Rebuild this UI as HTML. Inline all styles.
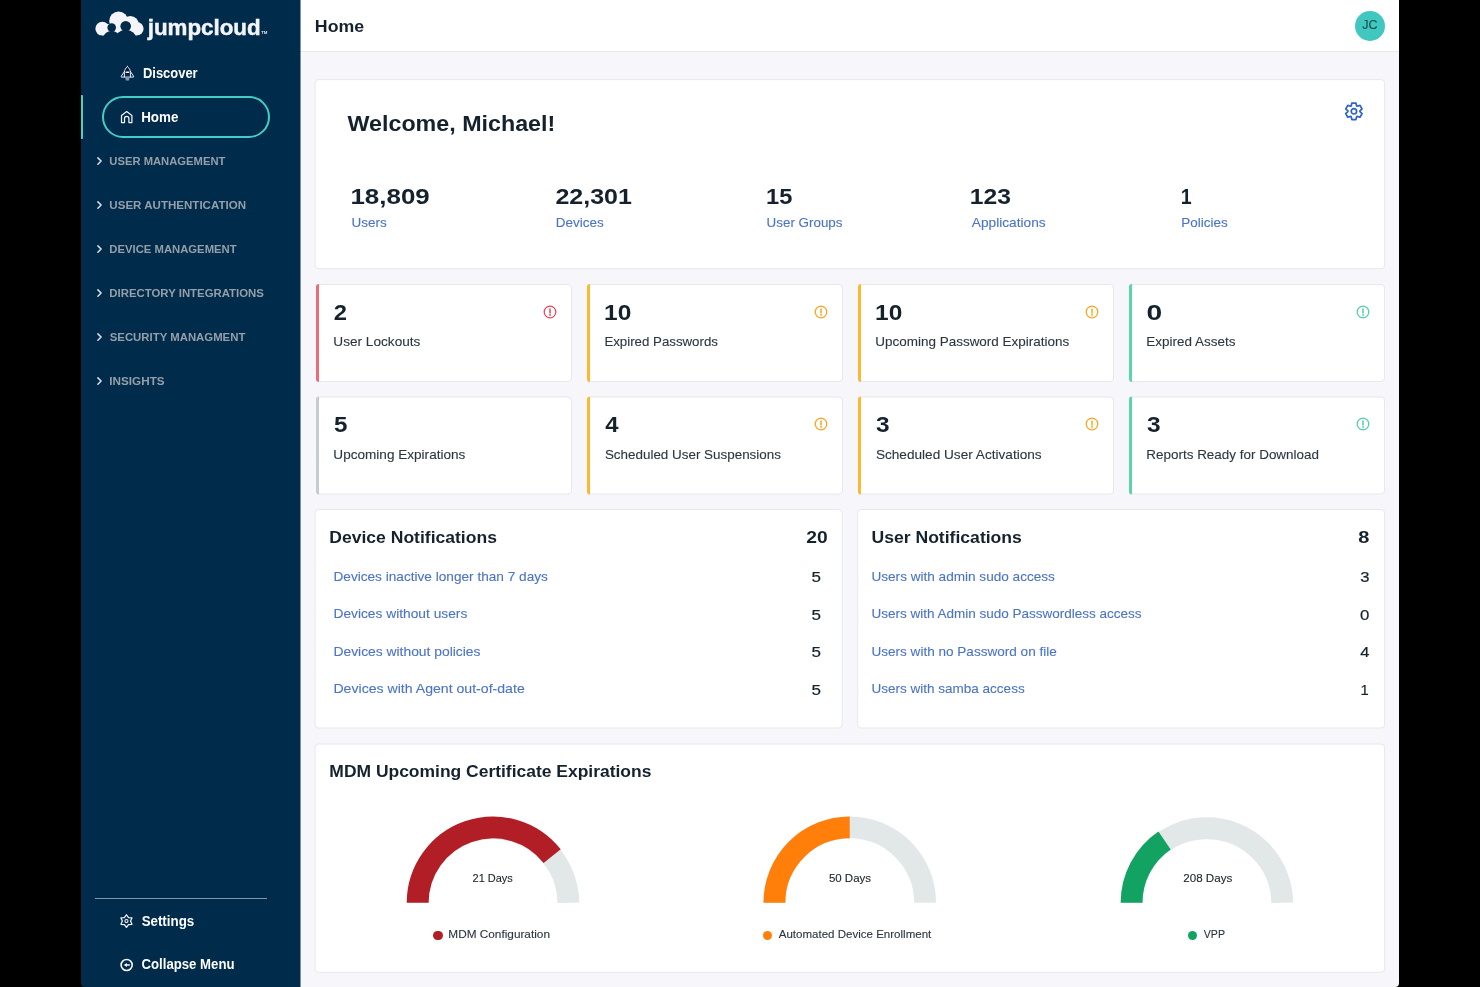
<!DOCTYPE html>
<html><head><meta charset="utf-8"><title>Home</title>
<style>
html,body{margin:0;padding:0;background:#000;}
body{width:1480px;height:987px;position:relative;overflow:hidden;font-family:"Liberation Sans",sans-serif;}
#root{position:absolute;left:0;top:0;width:1480px;height:987px;will-change:transform;}
.a{position:absolute;display:block;}
.t{position:absolute;display:block;white-space:pre;transform-origin:0 0;font-family:"Liberation Sans",sans-serif;}
</style></head><body><div id="root">
<div class="a" style="left:81px;top:0px;width:219px;height:987px;background:#002b4a;border-bottom-left-radius:4px;"></div>
<div class="a" style="left:300px;top:0px;width:1099px;height:987px;background:#f6f6fb;border-bottom-right-radius:4px;"></div>
<div class="a" style="left:300px;top:0px;width:1099px;height:51px;background:#fff;"></div>
<div class="a" style="left:300px;top:51px;width:1099px;height:1px;background:#e6e9ee;"></div>
<div class="a" style="left:300px;top:0px;width:1px;height:987px;background:rgba(0,43,74,0.5);"></div>
<svg class="a" style="left:93px;top:8px" width="54" height="32" viewBox="93 8 54 32">
<g fill="#f4f5fa">
<circle cx="102.4" cy="28.8" r="7"/><circle cx="118.6" cy="21" r="9.4"/><circle cx="130.3" cy="24.6" r="8.6"/><circle cx="136.8" cy="28.8" r="6.8"/>
<rect x="102" y="24" width="35" height="11.8"/>
</g>
<g fill="#002b4a">
<circle cx="111.7" cy="27.6" r="4.3"/><circle cx="125.7" cy="26.2" r="5.3"/>
<ellipse cx="111.6" cy="37.6" rx="8.2" ry="6.6"/>
<ellipse cx="125.8" cy="38.2" rx="10.4" ry="8.2"/>
<rect x="100" y="35.6" width="40" height="5"/>
</g>
</svg>
<span class="t" style="left:147px;top:17px;font-size:22px;line-height:22px;font-weight:700;color:#f4f5fa;transform:translate(0.68px,0.38px) scaleX(1.0161);-webkit-text-stroke:0.45px #f4f5fa;">jumpcloud</span>
<span class="t" style="left:261px;top:32px;font-size:3.8px;line-height:3.8px;font-weight:700;color:#e3e7ee;transform:translate(0.20px,0.38px) scaleX(1.1429);">TM</span>
<svg class="a" style="left:118px;top:63px" width="20" height="20" viewBox="118 63 20 20" fill="none" stroke="#e9edf2" stroke-width="1" stroke-linejoin="round" stroke-linecap="round">
<path d="M127.4 66.5 C125.5 68.2 124.4 70.2 124.4 72.4 V77.1 H130.4 V72.4 C130.4 70.2 129.3 68.2 127.4 66.5 Z" fill="#001a3c"/>
<path d="M124.4 71.4 L121.3 76.2 V77.1 H124.4"/>
<path d="M130.4 71.4 L133.5 76.2 V77.1 H130.4"/>
<path d="M126.2 72.2 H128.6" stroke-width="1.5" stroke="#ffffff"/>
<path d="M125.5 75.2 H129.3" stroke="#1e466b" stroke-width="0.8"/>
<path d="M125.3 77.8 H129.5 L129 80.6 H125.8 Z" fill="#8497aa" stroke="none"/>
</svg>
<span class="t" style="left:142px;top:66px;font-size:14px;line-height:14px;font-weight:700;color:#ffffff;transform:translate(0.94px,0.15px) scaleX(0.9247);">Discover</span>
<div class="a" style="left:81px;top:95px;width:2px;height:44px;background:#45d2cb;border-radius:0 1px 1px 0;"></div>
<div class="a" style="left:102px;top:96px;width:167.5px;height:42px;box-sizing:border-box;border:2px solid #43cdc7;border-radius:21px;"></div>
<svg class="a" style="left:119px;top:109px" width="16" height="16" viewBox="0 0 16 16" fill="none" stroke="#f2f4f8" stroke-width="1.25" stroke-linejoin="round">
<path d="M2.5 6.6 L7.7 2.6 L12.9 6.6 V13.6 H9.9 V9.6 C9.9 8.3 8.9 7.4 7.7 7.4 C6.5 7.4 5.5 8.3 5.5 9.6 V13.6 H2.5 Z"/>
</svg>
<span class="t" style="left:141px;top:110px;font-size:14px;line-height:14px;font-weight:700;color:#ffffff;transform:translate(0.16px,0.15px) scaleX(0.9568);">Home</span>
<span class="t" style="left:109px;top:156px;font-size:11px;line-height:11px;font-weight:700;color:#949fa9;transform:translate(0.36px,0.19px) scaleX(1.0204);">USER MANAGEMENT</span>
<svg class="a" style="left:95px;top:155.00px" width="10" height="12" viewBox="0 0 10 12" fill="none" stroke="#dbe2e9" stroke-width="1.5" stroke-linecap="round" stroke-linejoin="round"><path d="M2.9 2.9 L6.1 6.05 L2.9 9.2"/></svg>
<span class="t" style="left:109px;top:200px;font-size:11px;line-height:11px;font-weight:700;color:#949fa9;transform:translate(0.34px,0.19px) scaleX(1.0499);">USER AUTHENTICATION</span>
<svg class="a" style="left:95px;top:199.00px" width="10" height="12" viewBox="0 0 10 12" fill="none" stroke="#dbe2e9" stroke-width="1.5" stroke-linecap="round" stroke-linejoin="round"><path d="M2.9 2.9 L6.1 6.05 L2.9 9.2"/></svg>
<span class="t" style="left:109px;top:244px;font-size:11px;line-height:11px;font-weight:700;color:#949fa9;transform:translate(0.36px,0.19px) scaleX(1.0257);">DEVICE MANAGEMENT</span>
<svg class="a" style="left:95px;top:243.00px" width="10" height="12" viewBox="0 0 10 12" fill="none" stroke="#dbe2e9" stroke-width="1.5" stroke-linecap="round" stroke-linejoin="round"><path d="M2.9 2.9 L6.1 6.05 L2.9 9.2"/></svg>
<span class="t" style="left:109px;top:288px;font-size:11px;line-height:11px;font-weight:700;color:#949fa9;transform:translate(0.35px,0.19px) scaleX(1.0349);">DIRECTORY INTEGRATIONS</span>
<svg class="a" style="left:95px;top:287.00px" width="10" height="12" viewBox="0 0 10 12" fill="none" stroke="#dbe2e9" stroke-width="1.5" stroke-linecap="round" stroke-linejoin="round"><path d="M2.9 2.9 L6.1 6.05 L2.9 9.2"/></svg>
<span class="t" style="left:109px;top:332px;font-size:11px;line-height:11px;font-weight:700;color:#949fa9;transform:translate(0.74px,0.19px) scaleX(1.0338);">SECURITY MANAGMENT</span>
<svg class="a" style="left:95px;top:331.00px" width="10" height="12" viewBox="0 0 10 12" fill="none" stroke="#dbe2e9" stroke-width="1.5" stroke-linecap="round" stroke-linejoin="round"><path d="M2.9 2.9 L6.1 6.05 L2.9 9.2"/></svg>
<span class="t" style="left:109px;top:376px;font-size:11px;line-height:11px;font-weight:700;color:#949fa9;transform:translate(0.33px,0.19px) scaleX(1.0647);">INSIGHTS</span>
<svg class="a" style="left:95px;top:375.00px" width="10" height="12" viewBox="0 0 10 12" fill="none" stroke="#dbe2e9" stroke-width="1.5" stroke-linecap="round" stroke-linejoin="round"><path d="M2.9 2.9 L6.1 6.05 L2.9 9.2"/></svg>
<div class="a" style="left:95px;top:898px;width:172px;height:1px;background:#8195a6;"></div>
<svg class="a" style="left:118px;top:912px" width="18" height="18" viewBox="118 912 18 18" fill="none" stroke="#f2f4f8" stroke-width="1.25" stroke-linejoin="round">
<path d="M126.45 914.75 L124.40 917.55 L120.95 917.93 L122.35 921.10 L120.95 924.27 L124.40 924.65 L126.45 927.45 L128.50 924.65 L131.95 924.27 L130.55 921.10 L131.95 917.93 L128.50 917.55 Z"/><circle cx="126.45" cy="921.1" r="1.55" stroke-width="1.1"/></svg>
<span class="t" style="left:141px;top:913px;font-size:14px;line-height:14px;font-weight:700;color:#ffffff;transform:translate(0.64px,0.65px) scaleX(0.9517);">Settings</span>
<svg class="a" style="left:118px;top:956px" width="18" height="18" viewBox="118 956 18 18" fill="none" stroke="#f5f6fa" stroke-width="1.6">
<circle cx="126.65" cy="965" r="5.55"/><path d="M123.7 965 L126.9 963.1 V966.9 Z" fill="#f5f6fa" stroke="none"/><path d="M126.5 965 H129.4" stroke-width="1.5" stroke-linecap="round"/></svg>
<span class="t" style="left:141px;top:957px;font-size:14px;line-height:14px;font-weight:700;color:#ffffff;transform:translate(0.53px,0.40px) scaleX(0.9410);">Collapse Menu</span>
<span class="t" style="left:314px;top:18px;font-size:16.8px;line-height:16.8px;font-weight:700;color:#15222e;transform:translate(0.84px,0.68px) scaleX(1.0571);">Home</span>
<div class="a" style="left:1355px;top:11px;width:30px;height:30px;background:#40c8c0;border-radius:50%;"></div>
<span class="t" style="left:1362px;top:19px;font-size:12.5px;line-height:12.5px;font-weight:400;color:#17504f;-webkit-text-stroke:0.1px;transform:translate(0.27px,0.32px) scaleX(1.0034);">JC</span>
<svg class="a" style="left:0;top:0" width="1480" height="987" viewBox="0 0 1480 987"><rect x="315.1" y="79.6" width="1069.5" height="189.15" rx="3.5" fill="#fff" stroke="#e4e9ec" stroke-width="1"/></svg>
<span class="t" style="left:347px;top:112px;font-size:22.5px;line-height:22.5px;font-weight:700;color:#15222e;transform:translate(0.50px,0.95px) scaleX(1.0340);">Welcome, Michael!</span>
<svg class="a" style="left:1343px;top:100px" width="22" height="22" viewBox="0 0 22 22" fill="none" stroke="#2f63c5" stroke-width="1.7" stroke-linejoin="round">
<path d="M13.62 5.95 L12.96 3.05 L8.84 3.05 L8.18 5.95 L7.63 6.27 L4.79 5.40 L2.73 8.96 L4.91 10.99 L4.91 11.61 L2.73 13.64 L4.79 17.20 L7.63 16.33 L8.18 16.65 L8.84 19.55 L12.96 19.55 L13.62 16.65 L14.17 16.33 L17.01 17.20 L19.07 13.64 L16.89 11.61 L16.89 10.99 L19.07 8.96 L17.01 5.40 L14.17 6.27 Z"/><circle cx="10.9" cy="11.3" r="2.7"/></svg>
<span class="t" style="left:350px;top:184px;font-size:22.8px;line-height:22.8px;font-weight:700;color:#15222e;transform:translate(0.44px,0.90px) scaleX(1.1370);">18,809</span>
<span class="t" style="left:351px;top:215px;font-size:13px;line-height:13px;font-weight:400;color:#4b73c7;-webkit-text-stroke:0.1px;transform:translate(0.56px,1.00px) scaleX(1.0375);">Users</span>
<span class="t" style="left:555px;top:184px;font-size:22.8px;line-height:22.8px;font-weight:700;color:#15222e;transform:translate(0.43px,0.90px) scaleX(1.0969);">22,301</span>
<span class="t" style="left:555px;top:215px;font-size:13px;line-height:13px;font-weight:400;color:#4b73c7;-webkit-text-stroke:0.1px;transform:translate(0.81px,1.00px) scaleX(1.0384);">Devices</span>
<span class="t" style="left:766px;top:184px;font-size:22.8px;line-height:22.8px;font-weight:700;color:#15222e;transform:translate(0.07px,0.90px) scaleX(1.0374);">15</span>
<span class="t" style="left:766px;top:215px;font-size:13px;line-height:13px;font-weight:400;color:#4b73c7;-webkit-text-stroke:0.1px;transform:translate(0.57px,1.00px) scaleX(1.0307);">User Groups</span>
<span class="t" style="left:969px;top:184px;font-size:22.8px;line-height:22.8px;font-weight:700;color:#15222e;transform:translate(0.76px,0.90px) scaleX(1.0801);">123</span>
<span class="t" style="left:971px;top:215px;font-size:13px;line-height:13px;font-weight:400;color:#4b73c7;-webkit-text-stroke:0.1px;transform:translate(0.85px,1.00px) scaleX(1.0516);">Applications</span>
<span class="t" style="left:1180px;top:184px;font-size:22.8px;line-height:22.8px;font-weight:700;color:#15222e;transform:translate(0.82px,0.90px) scaleX(0.8605);">1</span>
<span class="t" style="left:1181px;top:215px;font-size:13px;line-height:13px;font-weight:400;color:#4b73c7;-webkit-text-stroke:0.1px;transform:translate(0.32px,1.00px) scaleX(1.0340);">Policies</span>
<svg class="a" style="left:0;top:0" width="1480" height="987" viewBox="0 0 1480 987"><rect x="316.5" y="284.5" width="255.0" height="97.0" rx="3.5" fill="#fff" stroke="#e4e9ec" stroke-width="1"/><path d="M319.0 284.0 A3 3 0 0 0 316.0 287.0 V379.0 A3 3 0 0 0 319.0 382.0 Z" fill="#eb6c76"/></svg>
<span class="t" style="left:333px;top:300px;font-size:22.8px;line-height:22.8px;font-weight:700;color:#15222e;transform:translate(0.82px,0.60px) scaleX(1.0409);">2</span>
<span class="t" style="left:333px;top:335px;font-size:13px;line-height:13px;font-weight:400;color:#2b3641;-webkit-text-stroke:0.1px;transform:translate(0.35px,0.25px) scaleX(1.0471);">User Lockouts</span>
<svg class="a" style="left:541.50px;top:303.70px" width="16" height="16" viewBox="0 0 16 16" fill="none" stroke="#e2485c" stroke-width="1.25" stroke-linecap="round"><circle cx="8" cy="8" r="5.8"/><path d="M8 4.9 V8.9" stroke-width="1.5"/><circle cx="8" cy="10.9" r="0.55" fill="#e2485c" stroke-width="0.6"/></svg>
<svg class="a" style="left:0;top:0" width="1480" height="987" viewBox="0 0 1480 987"><rect x="587.5" y="284.5" width="255.0" height="97.0" rx="3.5" fill="#fff" stroke="#e4e9ec" stroke-width="1"/><path d="M590.0 284.0 A3 3 0 0 0 587.0 287.0 V379.0 A3 3 0 0 0 590.0 382.0 Z" fill="#fdb731"/></svg>
<span class="t" style="left:604px;top:300px;font-size:22.8px;line-height:22.8px;font-weight:700;color:#15222e;transform:translate(0.12px,0.60px) scaleX(1.0739);">10</span>
<span class="t" style="left:604px;top:335px;font-size:13px;line-height:13px;font-weight:400;color:#2b3641;-webkit-text-stroke:0.1px;transform:translate(0.38px,0.25px) scaleX(1.0203);">Expired Passwords</span>
<svg class="a" style="left:812.50px;top:303.70px" width="16" height="16" viewBox="0 0 16 16" fill="none" stroke="#f9a51a" stroke-width="1.25" stroke-linecap="round"><circle cx="8" cy="8" r="5.8"/><path d="M8 4.9 V8.9" stroke-width="1.5"/><circle cx="8" cy="10.9" r="0.55" fill="#f9a51a" stroke-width="0.6"/></svg>
<svg class="a" style="left:0;top:0" width="1480" height="987" viewBox="0 0 1480 987"><rect x="858.5" y="284.5" width="255.0" height="97.0" rx="3.5" fill="#fff" stroke="#e4e9ec" stroke-width="1"/><path d="M861.0 284.0 A3 3 0 0 0 858.0 287.0 V379.0 A3 3 0 0 0 861.0 382.0 Z" fill="#fdb731"/></svg>
<span class="t" style="left:875px;top:300px;font-size:22.8px;line-height:22.8px;font-weight:700;color:#15222e;transform:translate(0.12px,0.60px) scaleX(1.0739);">10</span>
<span class="t" style="left:875px;top:335px;font-size:13px;line-height:13px;font-weight:400;color:#2b3641;-webkit-text-stroke:0.1px;transform:translate(0.36px,0.25px) scaleX(1.0355);">Upcoming Password Expirations</span>
<svg class="a" style="left:1083.50px;top:303.70px" width="16" height="16" viewBox="0 0 16 16" fill="none" stroke="#f9a51a" stroke-width="1.25" stroke-linecap="round"><circle cx="8" cy="8" r="5.8"/><path d="M8 4.9 V8.9" stroke-width="1.5"/><circle cx="8" cy="10.9" r="0.55" fill="#f9a51a" stroke-width="0.6"/></svg>
<svg class="a" style="left:0;top:0" width="1480" height="987" viewBox="0 0 1480 987"><rect x="1129.5" y="284.5" width="255.0" height="97.0" rx="3.5" fill="#fff" stroke="#e4e9ec" stroke-width="1"/><path d="M1132.0 284.0 A3 3 0 0 0 1129.0 287.0 V379.0 A3 3 0 0 0 1132.0 382.0 Z" fill="#5bd3ab"/></svg>
<span class="t" style="left:1146px;top:300px;font-size:22.8px;line-height:22.8px;font-weight:700;color:#15222e;transform:translate(0.52px,0.60px) scaleX(1.2368);">0</span>
<span class="t" style="left:1146px;top:335px;font-size:13px;line-height:13px;font-weight:400;color:#2b3641;-webkit-text-stroke:0.1px;transform:translate(0.36px,0.25px) scaleX(1.0352);">Expired Assets</span>
<svg class="a" style="left:1354.50px;top:303.70px" width="16" height="16" viewBox="0 0 16 16" fill="none" stroke="#52cda5" stroke-width="1.25" stroke-linecap="round"><circle cx="8" cy="8" r="5.8"/><path d="M8 4.9 V8.9" stroke-width="1.5"/><circle cx="8" cy="10.9" r="0.55" fill="#52cda5" stroke-width="0.6"/></svg>
<svg class="a" style="left:0;top:0" width="1480" height="987" viewBox="0 0 1480 987"><rect x="316.5" y="397.0" width="255.0" height="97.0" rx="3.5" fill="#fff" stroke="#e4e9ec" stroke-width="1"/><path d="M319.0 396.5 A3 3 0 0 0 316.0 399.5 V491.5 A3 3 0 0 0 319.0 494.5 Z" fill="#c7cbd0"/></svg>
<span class="t" style="left:333px;top:413px;font-size:22.8px;line-height:22.8px;font-weight:700;color:#15222e;transform:translate(0.94px,0.10px) scaleX(1.0609);">5</span>
<span class="t" style="left:333px;top:447px;font-size:13px;line-height:13px;font-weight:400;color:#2b3641;-webkit-text-stroke:0.1px;transform:translate(0.36px,0.75px) scaleX(1.0438);">Upcoming Expirations</span>
<svg class="a" style="left:0;top:0" width="1480" height="987" viewBox="0 0 1480 987"><rect x="587.5" y="397.0" width="255.0" height="97.0" rx="3.5" fill="#fff" stroke="#e4e9ec" stroke-width="1"/><path d="M590.0 396.5 A3 3 0 0 0 587.0 399.5 V491.5 A3 3 0 0 0 590.0 494.5 Z" fill="#fdb731"/></svg>
<span class="t" style="left:605px;top:413px;font-size:22.8px;line-height:22.8px;font-weight:700;color:#15222e;transform:translate(0.34px,0.10px) scaleX(1.0465);">4</span>
<span class="t" style="left:604px;top:447px;font-size:13px;line-height:13px;font-weight:400;color:#2b3641;-webkit-text-stroke:0.1px;transform:translate(0.88px,0.75px) scaleX(1.0323);">Scheduled User Suspensions</span>
<svg class="a" style="left:812.50px;top:416.20px" width="16" height="16" viewBox="0 0 16 16" fill="none" stroke="#f9a51a" stroke-width="1.25" stroke-linecap="round"><circle cx="8" cy="8" r="5.8"/><path d="M8 4.9 V8.9" stroke-width="1.5"/><circle cx="8" cy="10.9" r="0.55" fill="#f9a51a" stroke-width="0.6"/></svg>
<svg class="a" style="left:0;top:0" width="1480" height="987" viewBox="0 0 1480 987"><rect x="858.5" y="397.0" width="255.0" height="97.0" rx="3.5" fill="#fff" stroke="#e4e9ec" stroke-width="1"/><path d="M861.0 396.5 A3 3 0 0 0 858.0 399.5 V491.5 A3 3 0 0 0 861.0 494.5 Z" fill="#fdb731"/></svg>
<span class="t" style="left:876px;top:413px;font-size:22.8px;line-height:22.8px;font-weight:700;color:#15222e;transform:translate(0.06px,0.10px) scaleX(1.0725);">3</span>
<span class="t" style="left:875px;top:447px;font-size:13px;line-height:13px;font-weight:400;color:#2b3641;-webkit-text-stroke:0.1px;transform:translate(0.88px,0.75px) scaleX(1.0475);">Scheduled User Activations</span>
<svg class="a" style="left:1083.50px;top:416.20px" width="16" height="16" viewBox="0 0 16 16" fill="none" stroke="#f9a51a" stroke-width="1.25" stroke-linecap="round"><circle cx="8" cy="8" r="5.8"/><path d="M8 4.9 V8.9" stroke-width="1.5"/><circle cx="8" cy="10.9" r="0.55" fill="#f9a51a" stroke-width="0.6"/></svg>
<svg class="a" style="left:0;top:0" width="1480" height="987" viewBox="0 0 1480 987"><rect x="1129.5" y="397.0" width="255.0" height="97.0" rx="3.5" fill="#fff" stroke="#e4e9ec" stroke-width="1"/><path d="M1132.0 396.5 A3 3 0 0 0 1129.0 399.5 V491.5 A3 3 0 0 0 1132.0 494.5 Z" fill="#5bd3ab"/></svg>
<span class="t" style="left:1147px;top:413px;font-size:22.8px;line-height:22.8px;font-weight:700;color:#15222e;transform:translate(0.06px,0.10px) scaleX(1.0725);">3</span>
<span class="t" style="left:1146px;top:447px;font-size:13px;line-height:13px;font-weight:400;color:#2b3641;-webkit-text-stroke:0.1px;transform:translate(0.37px,0.75px) scaleX(1.0339);">Reports Ready for Download</span>
<svg class="a" style="left:1354.50px;top:416.20px" width="16" height="16" viewBox="0 0 16 16" fill="none" stroke="#52cda5" stroke-width="1.25" stroke-linecap="round"><circle cx="8" cy="8" r="5.8"/><path d="M8 4.9 V8.9" stroke-width="1.5"/><circle cx="8" cy="10.9" r="0.55" fill="#52cda5" stroke-width="0.6"/></svg>
<svg class="a" style="left:0;top:0" width="1480" height="987" viewBox="0 0 1480 987"><rect x="315.1" y="509.5" width="527.1" height="218.5" rx="3.5" fill="#fff" stroke="#e4e9ec" stroke-width="1"/></svg>
<svg class="a" style="left:0;top:0" width="1480" height="987" viewBox="0 0 1480 987"><rect x="857.7" y="509.5" width="526.8999999999999" height="218.5" rx="3.5" fill="#fff" stroke="#e4e9ec" stroke-width="1"/></svg>
<span class="t" style="left:329px;top:529px;font-size:17px;line-height:17px;font-weight:700;color:#15222e;transform:translate(0.34px,0.36px) scaleX(1.0311);">Device Notifications</span>
<span class="t" style="left:806px;top:529px;font-size:17px;line-height:17px;font-weight:700;color:#15222e;transform:translate(0.18px,0.36px) scaleX(1.1329);">20</span>
<span class="t" style="left:871px;top:529px;font-size:17px;line-height:17px;font-weight:700;color:#15222e;transform:translate(0.47px,0.36px) scaleX(1.0339);">User Notifications</span>
<span class="t" style="left:1358px;top:529px;font-size:17px;line-height:17px;font-weight:700;color:#15222e;transform:translate(0.16px,0.36px) scaleX(1.1765);">8</span>
<span class="t" style="left:333px;top:569px;font-size:13px;line-height:13px;font-weight:400;color:#4b73c7;-webkit-text-stroke:0.1px;transform:translate(0.45px,0.75px) scaleX(1.0486);">Devices inactive longer than 7 days</span>
<span class="t" style="left:811px;top:569px;font-size:15.3px;line-height:15.3px;font-weight:400;color:#15222e;-webkit-text-stroke:0.1px;transform:translate(0.44px,0.40px) scaleX(1.1119);-webkit-text-stroke:0.2px;">5</span>
<span class="t" style="left:871px;top:569px;font-size:13px;line-height:13px;font-weight:400;color:#4b73c7;-webkit-text-stroke:0.1px;transform:translate(0.46px,0.75px) scaleX(1.0445);">Users with admin sudo access</span>
<span class="t" style="left:1360px;top:569px;font-size:15.3px;line-height:15.3px;font-weight:400;color:#15222e;-webkit-text-stroke:0.1px;transform:translate(0.21px,0.40px) scaleX(1.0847);-webkit-text-stroke:0.2px;">3</span>
<span class="t" style="left:333px;top:607px;font-size:13px;line-height:13px;font-weight:400;color:#4b73c7;-webkit-text-stroke:0.1px;transform:translate(0.44px,0.25px) scaleX(1.0589);">Devices without users</span>
<span class="t" style="left:811px;top:606px;font-size:15.3px;line-height:15.3px;font-weight:400;color:#15222e;-webkit-text-stroke:0.1px;transform:translate(0.44px,0.90px) scaleX(1.1119);-webkit-text-stroke:0.2px;">5</span>
<span class="t" style="left:871px;top:607px;font-size:13px;line-height:13px;font-weight:400;color:#4b73c7;-webkit-text-stroke:0.1px;transform:translate(0.46px,0.25px) scaleX(1.0386);">Users with Admin sudo Passwordless access</span>
<span class="t" style="left:1359px;top:606px;font-size:15.3px;line-height:15.3px;font-weight:400;color:#15222e;-webkit-text-stroke:0.1px;transform:translate(0.95px,0.90px) scaleX(1.1000);-webkit-text-stroke:0.2px;">0</span>
<span class="t" style="left:333px;top:644px;font-size:13px;line-height:13px;font-weight:400;color:#4b73c7;-webkit-text-stroke:0.1px;transform:translate(0.44px,0.75px) scaleX(1.0650);">Devices without policies</span>
<span class="t" style="left:811px;top:644px;font-size:15.3px;line-height:15.3px;font-weight:400;color:#15222e;-webkit-text-stroke:0.1px;transform:translate(0.44px,0.40px) scaleX(1.1119);-webkit-text-stroke:0.2px;">5</span>
<span class="t" style="left:871px;top:644px;font-size:13px;line-height:13px;font-weight:400;color:#4b73c7;-webkit-text-stroke:0.1px;transform:translate(0.46px,0.75px) scaleX(1.0426);">Users with no Password on file</span>
<span class="t" style="left:1360px;top:644px;font-size:15.3px;line-height:15.3px;font-weight:400;color:#15222e;-webkit-text-stroke:0.1px;transform:translate(0.23px,0.40px) scaleX(1.0794);-webkit-text-stroke:0.2px;">4</span>
<span class="t" style="left:333px;top:682px;font-size:13px;line-height:13px;font-weight:400;color:#4b73c7;-webkit-text-stroke:0.1px;transform:translate(0.41px,0.25px) scaleX(1.0851);">Devices with Agent out-of-date</span>
<span class="t" style="left:811px;top:681px;font-size:15.3px;line-height:15.3px;font-weight:400;color:#15222e;-webkit-text-stroke:0.1px;transform:translate(0.44px,0.90px) scaleX(1.1119);-webkit-text-stroke:0.2px;">5</span>
<span class="t" style="left:871px;top:682px;font-size:13px;line-height:13px;font-weight:400;color:#4b73c7;-webkit-text-stroke:0.1px;transform:translate(0.46px,0.25px) scaleX(1.0394);">Users with samba access</span>
<span class="t" style="left:1360px;top:681px;font-size:15.3px;line-height:15.3px;font-weight:400;color:#15222e;-webkit-text-stroke:0.1px;transform:translate(0.51px,0.90px) scaleX(0.9660);-webkit-text-stroke:0.2px;">1</span>
<svg class="a" style="left:0;top:0" width="1480" height="987" viewBox="0 0 1480 987"><rect x="315.1" y="744" width="1069.5" height="228.25" rx="3.5" fill="#fff" stroke="#e4e9ec" stroke-width="1"/></svg>
<span class="t" style="left:329px;top:763px;font-size:17px;line-height:17px;font-weight:700;color:#15222e;transform:translate(0.34px,0.36px) scaleX(1.0269);">MDM Upcoming Certificate Expirations</span>
<svg class="a" style="left:0;top:0" width="1480" height="987" viewBox="0 0 1480 987"><path d="M417.68 902.75 A75.33 75.33 0 0 1 568.33 902.75" stroke="#e2e7e7" stroke-width="21.85" fill="none"/><path d="M417.68 902.75 A75.33 75.33 0 0 1 552.15 856.12" stroke="#b21e25" stroke-width="21.85" fill="none"/></svg>
<svg class="a" style="left:0;top:0" width="1480" height="987" viewBox="0 0 1480 987"><path d="M774.42 902.75 A75.33 75.33 0 0 1 925.08 902.75" stroke="#e2e7e7" stroke-width="21.85" fill="none"/><path d="M774.42 902.75 A75.33 75.33 0 0 1 849.75 827.42" stroke="#ff7f0a" stroke-width="21.85" fill="none"/></svg>
<svg class="a" style="left:0;top:0" width="1480" height="987" viewBox="0 0 1480 987"><path d="M1131.58 902.75 A75.33 75.33 0 0 1 1282.23 902.75" stroke="#e2e7e7" stroke-width="21.85" fill="none"/><path d="M1131.58 902.75 A75.33 75.33 0 0 1 1164.56 840.45" stroke="#12a362" stroke-width="21.85" fill="none"/></svg>
<span class="t" style="left:472px;top:872px;font-size:11.5px;line-height:11.5px;font-weight:400;color:#20262c;-webkit-text-stroke:0.1px;transform:translate(0.52px,0.52px) scaleX(0.9547);">21 Days</span>
<span class="t" style="left:828px;top:872px;font-size:11.5px;line-height:11.5px;font-weight:400;color:#20262c;-webkit-text-stroke:0.1px;transform:translate(0.88px,0.52px) scaleX(1.0000);">50 Days</span>
<span class="t" style="left:1183px;top:872px;font-size:11.5px;line-height:11.5px;font-weight:400;color:#20262c;-webkit-text-stroke:0.1px;transform:translate(0.24px,0.52px) scaleX(1.0105);">208 Days</span>
<div class="a" style="left:433.25px;top:930.6px;width:9.3px;height:9.3px;background:#b21e25;border-radius:50%;"></div>
<span class="t" style="left:448px;top:929px;font-size:11.5px;line-height:11.5px;font-weight:400;color:#2a3440;-webkit-text-stroke:0.1px;transform:translate(0.35px,0.27px) scaleX(1.0256);">MDM Configuration</span>
<div class="a" style="left:763px;top:930.6px;width:9.3px;height:9.3px;background:#ff7f0a;border-radius:50%;"></div>
<span class="t" style="left:778px;top:929px;font-size:11.5px;line-height:11.5px;font-weight:400;color:#2a3440;-webkit-text-stroke:0.1px;transform:translate(0.75px,0.27px) scaleX(1.0025);">Automated Device Enrollment</span>
<div class="a" style="left:1187.6px;top:930.6px;width:9.3px;height:9.3px;background:#12a362;border-radius:50%;"></div>
<span class="t" style="left:1203px;top:929px;font-size:11.5px;line-height:11.5px;font-weight:400;color:#2a3440;-webkit-text-stroke:0.1px;transform:translate(0.75px,0.27px) scaleX(0.9222);">VPP</span>
</div></body></html>
